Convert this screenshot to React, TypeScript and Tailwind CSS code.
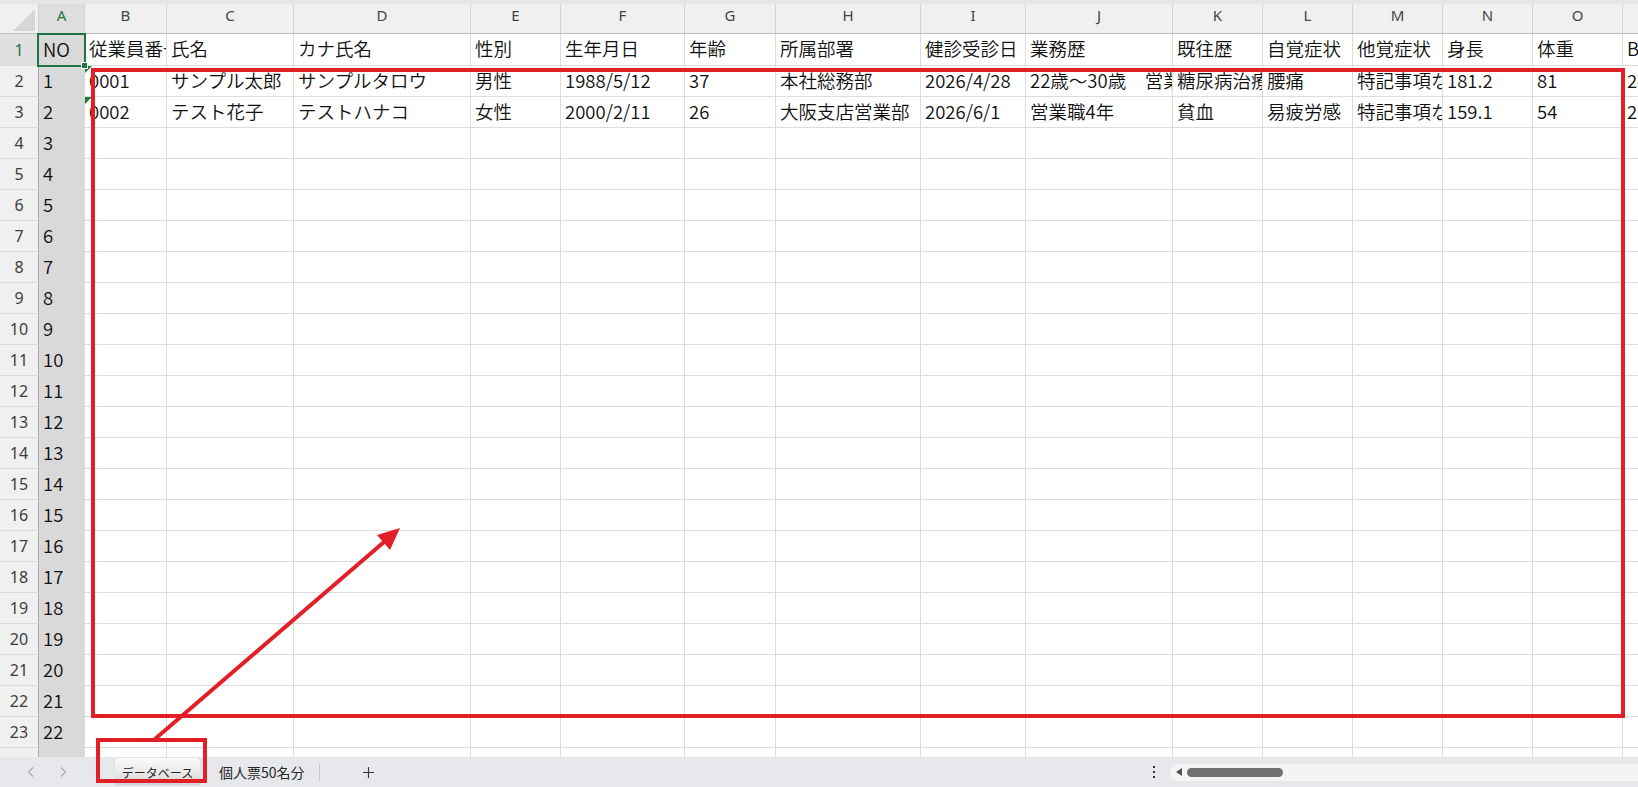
import clsx from "clsx";

type Col = { key: string; w: string };

const COLS: Col[] = [
  { key: "A", w: "w-[46px]" },
  { key: "B", w: "w-[82px]" },
  { key: "C", w: "w-[127px]" },
  { key: "D", w: "w-[177px]" },
  { key: "E", w: "w-[90px]" },
  { key: "F", w: "w-[124px]" },
  { key: "G", w: "w-[91px]" },
  { key: "H", w: "w-[145px]" },
  { key: "I", w: "w-[105px]" },
  { key: "J", w: "w-[147px]" },
  { key: "K", w: "w-[90px]" },
  { key: "L", w: "w-[90px]" },
  { key: "M", w: "w-[90px]" },
  { key: "N", w: "w-[90px]" },
  { key: "O", w: "w-[90px]" },
  { key: "P", w: "w-[90px]" },
];

const HEAD = [
  "NO", "従業員番号", "氏名", "カナ氏名", "性別", "生年月日", "年齢", "所属部署",
  "健診受診日", "業務歴", "既往歴", "自覚症状", "他覚症状", "身長", "体重", "BMI",
];

const DATA = [
  ["1", "0001", "サンプル太郎", "サンプルタロウ", "男性", "1988/5/12", "37", "本社総務部",
    "2026/4/28", "22歳～30歳　営業職", "糖尿病治療中", "腰痛", "特記事項なし", "181.2", "81", "24.7"],
  ["2", "0002", "テスト花子", "テストハナコ", "女性", "2000/2/11", "26", "大阪支店営業部",
    "2026/6/1", "営業職4年", "貧血", "易疲労感", "特記事項なし", "159.1", "54", "21.3"],
];

// rows 1..24 (24 is cut off by the tab bar)
const ROWS: string[][] = [
  HEAD,
  ...DATA,
  ...Array.from({ length: 21 }, (_, i) => [String(i + 3)]),
];

function ErrorMark() {
  return (
    <svg className="absolute left-0 top-0" width="7" height="7" viewBox="0 0 7 7">
      <polygon points="0,0 7,0 0,7" fill="#1f7a36" />
    </svg>
  );
}

function Row({ n, cells }: { n: number; cells: string[] }) {
  const sel = n === 1;
  return (
    <div className={clsx("flex shrink-0", sel ? "h-[32px]" : "h-[31px]")}>
      <div
        className={clsx(
          "flex w-[39px] shrink-0 items-center justify-center border-r border-b border-r-[#a9a9a9] border-b-[#dadada] font-['Noto_Sans',sans-serif] text-[16px] leading-none",
          sel ? "bg-[#e0e0e0] text-[#217346]" : "bg-[#f0f0f0] text-[#3d3d3d]"
        )}
      >
        {n}
      </div>
      {COLS.map((c, i) => (
        <div
          key={c.key}
          className={clsx(
            "relative flex shrink-0 items-center overflow-hidden whitespace-nowrap pb-[2px] pl-[4px] text-[18.5px] leading-none text-[#111] [font-weight:350]",
            c.w,
            i === 0 ? "bg-[#d9d9d9]" : "border-r border-b border-[#dcdcdc] bg-white"
          )}
        >
          {i === 1 && (n === 2 || n === 3) && <ErrorMark />}
          {cells[i] ?? ""}
        </div>
      ))}
    </div>
  );
}

function ColumnHeader() {
  return (
    <div className="flex h-[30px] shrink-0 border-b border-[#bdbdbd] bg-[#f0f0f0] font-['Noto_Sans',sans-serif] text-[15px] leading-none">
      <div className="relative w-[39px] shrink-0 border-r border-[#cfcfcf]">
        <svg className="absolute left-[13px] top-[5px]" width="22" height="22" viewBox="0 0 22 22">
          <polygon points="22,0 22,22 0,22" fill="#d6d6d6" />
        </svg>
      </div>
      {COLS.map((c, i) => (
        <div
          key={c.key}
          className={clsx(
            "flex shrink-0 items-center justify-center border-r border-[#d4d4d4] pb-[6px]",
            c.w,
            i === 0 ? "bg-[#dedede] text-[#217346]" : "text-[#444]"
          )}
        >
          {c.key}
        </div>
      ))}
    </div>
  );
}

function TabBar() {
  return (
    <div className="flex h-[30px] shrink-0 items-center bg-[#e6e8ec] font-['Noto_Sans_CJK_JP',sans-serif]">
      <div className="flex w-[115px] shrink-0 items-center gap-[24px] pl-[27px]">
        <svg width="8" height="10" viewBox="0 0 8 10">
          <polyline points="6,0.5 1.5,5 6,9.5" fill="none" stroke="#a8a8a8" strokeWidth="1.2" />
        </svg>
        <svg width="8" height="10" viewBox="0 0 8 10">
          <polyline points="2,0.5 6.5,5 2,9.5" fill="none" stroke="#a8a8a8" strokeWidth="1.2" />
        </svg>
      </div>
      <div className="flex h-[27px] w-[85px] shrink-0 items-center justify-center self-start mt-[1px] rounded-t-[4px] bg-[linear-gradient(180deg,#fbfbfb_0%,#e9e9e9_55%,#d2d2d2_100%)] pt-[2px] text-[12px] text-[#262626] shadow-[0_0_1px_rgba(0,0,0,0.25)]">
        データベース
      </div>
      <div className="ml-[19px] shrink-0 text-[14px] text-[#262626]">個人票50名分</div>
      <div className="ml-[14px] h-[17px] w-px shrink-0 bg-[#c6c6c6]" />
      <svg className="ml-[43px] shrink-0" width="11" height="11" viewBox="0 0 11 11">
        <path d="M5.5 0v11M0 5.5h11" stroke="#3c3c3c" strokeWidth="1.2" />
      </svg>
      <svg className="ml-auto shrink-0" width="4" height="12" viewBox="0 0 4 12">
        <rect x="1" y="0" width="2" height="2" fill="#333" />
        <rect x="1" y="5" width="2" height="2" fill="#333" />
        <rect x="1" y="10" width="2" height="2" fill="#333" />
      </svg>
      <div className="ml-[14px] flex h-[17px] w-[468px] shrink-0 items-center gap-[5px] rounded-l-full bg-[#f4f4f4] pl-[6px]">
        <svg width="6" height="8" viewBox="0 0 6 8">
          <polygon points="6,0 6,8 0,4" fill="#505050" />
        </svg>
        <div className="h-[9px] w-[96px] rounded-full bg-[#707070]" />
      </div>
    </div>
  );
}

export default function App() {
  return (
    <div className="relative flex h-[787px] w-[1638px] flex-col overflow-hidden bg-white font-['Noto_Sans_CJK_JP',sans-serif]">
      <div className="h-[4px] shrink-0 bg-[#e6e6e6]" />
      <div className="flex min-h-0 flex-1 flex-col overflow-hidden">
        <ColumnHeader />
        {ROWS.map((cells, i) => (
          <Row key={i} n={i + 1} cells={cells} />
        ))}
      </div>
      <TabBar />

      {/* selection on A1 */}
      <div className="pointer-events-none absolute left-[37px] top-[33px] h-[34px] w-[49px] border-2 border-[#217346]" />
      <div className="pointer-events-none absolute left-[81px] top-[62px] h-[7px] w-[7px] border border-white bg-[#217346]" />

      {/* red annotations */}
      <div className="pointer-events-none absolute left-[91px] top-[68px] h-[650px] w-[1534px] border-4 border-[#e21f26]" />
      <div className="pointer-events-none absolute left-[96px] top-[738px] h-[45px] w-[111px] border-4 border-[#e21f26]" />
      <svg className="pointer-events-none absolute left-0 top-0" width="1638" height="787" viewBox="0 0 1638 787">
        <line x1="155" y1="739" x2="384" y2="542" stroke="#e21f26" strokeWidth="4" />
        <polygon points="400,528 390,550 377,535" fill="#e21f26" />
      </svg>
    </div>
  );
}
